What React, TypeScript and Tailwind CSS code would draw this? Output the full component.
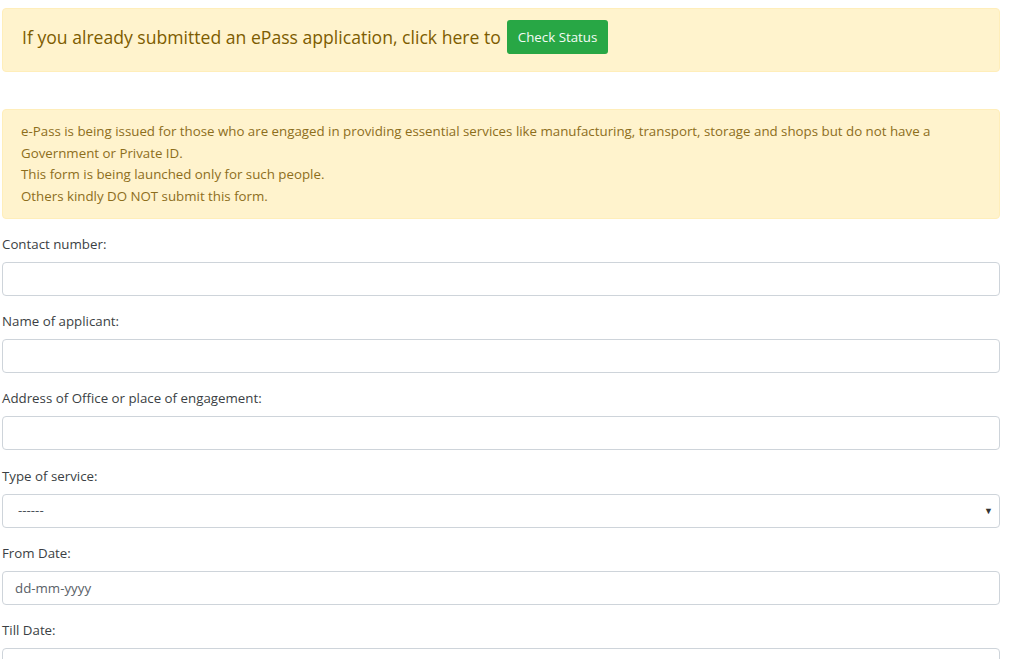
import React from 'react';

const fields = [
  { label: 'Contact number:', kind: 'text' },
  { label: 'Name of applicant:', kind: 'text' },
  { label: 'Address of Office or place of engagement:', kind: 'text' },
  { label: 'Type of service:', kind: 'select' },
  { label: 'From Date:', kind: 'date' },
  { label: 'Till Date:', kind: 'date' },
];

const inputCls =
  'block w-full h-[34px] px-[12px] bg-white border border-[#ced4da] rounded-[4px] text-[13.3px] text-[#495057] outline-none';

const App: React.FC = () => {
  return (
    <div
      className="min-h-screen bg-white text-[#212529]"
      style={{ fontFamily: '"Open Sans", "Noto Sans", sans-serif' }}
    >
      <div className="w-[998px] ml-[2px] pt-[8px]">
        {/* Status banner */}
        <div className="flex items-center gap-[6px] bg-[#fff3cd] border border-[#ffeeba] rounded-[4px] pl-[19px] pr-[20px] pt-[11px] pb-[17px]">
          <h5 className="text-[17.6px] font-medium text-[#7d5c00] leading-[34px]">
            If you already submitted an ePass application, click here to
          </h5>
          <button className="h-[34px] px-[11px] rounded-[3px] bg-[#28a745] text-[#f4fbf5] text-[13.3px] leading-[34px]">
            Check Status
          </button>
        </div>

        {/* Notice */}
        <div className="mt-[37px] bg-[#fff3cd] border border-[#ffeeba] rounded-[4px] px-[18px] py-[11px] text-[13.3px] leading-[21.5px] text-[#8d6e1c]">
          e-Pass is being issued for those who are engaged in providing essential services like manufacturing, transport, storage and shops but do not have a Government or Private ID.
          <br />
          This form is being launched only for such people.
          <br />
          Others kindly DO NOT submit this form.
        </div>

        <form className="mt-[14px]">
          {fields.map((f) => (
            <div key={f.label} className="mb-[14.2px]">
              <label className="block mb-[7px] text-[13.3px] leading-[22px] text-[#3b3f44]">{f.label}</label>
              {f.kind === 'select' ? (
                <div className="relative">
                  <select className={`${inputCls} appearance-none pl-[15px] text-[#6c757d]`} defaultValue="">
                    <option value="">------</option>
                  </select>
                  <span className="pointer-events-none absolute right-[7px] top-1/2 -translate-y-1/2 text-[9px] text-[#333]">
                    ▼
                  </span>
                </div>
              ) : (
                <input
                  type="text"
                  placeholder={f.kind === 'date' ? 'dd-mm-yyyy' : ''}
                  className={`${inputCls} placeholder:text-[#5a6168]`}
                />
              )}
            </div>
          ))}
        </form>
      </div>
    </div>
  );
};

export default App;
